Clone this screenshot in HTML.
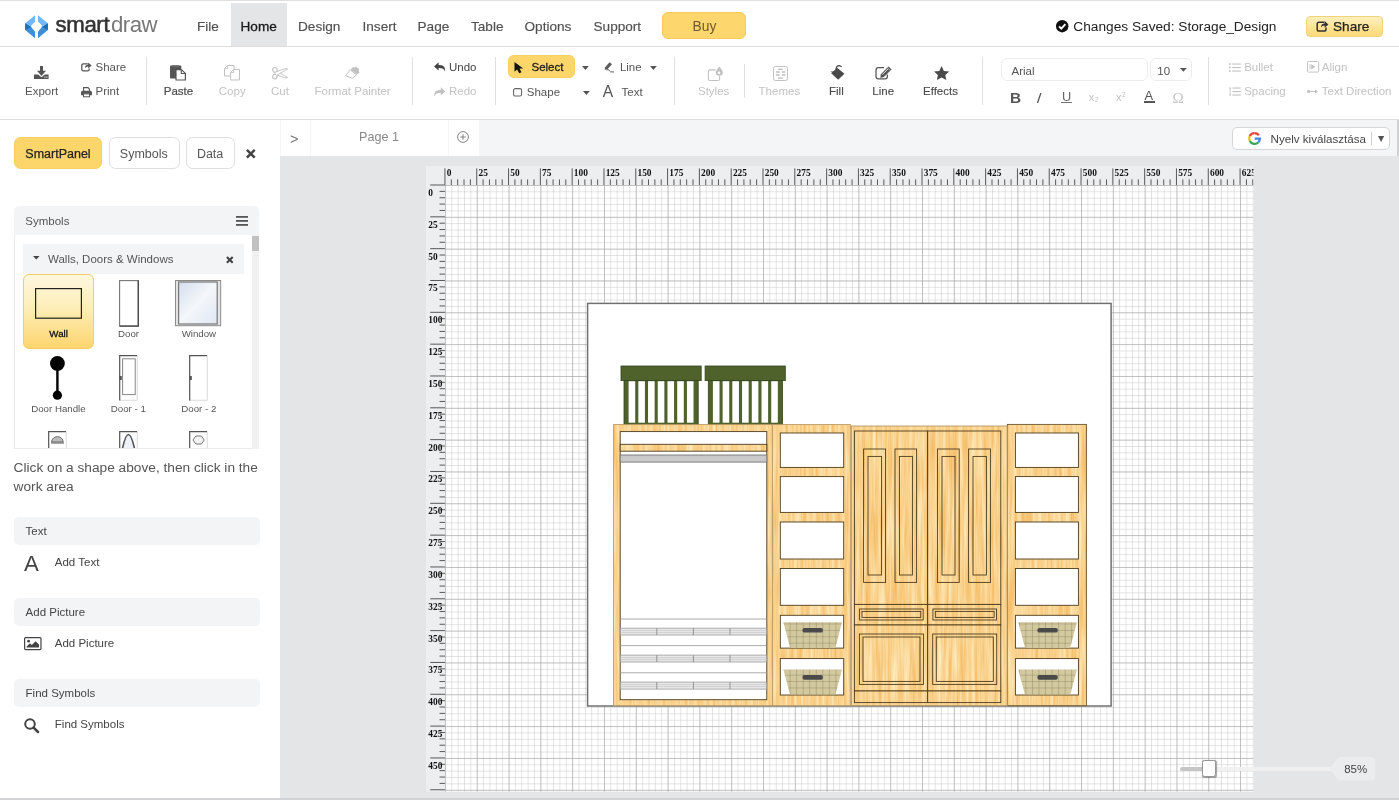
<!DOCTYPE html>
<html lang="en">
<head>
<meta charset="utf-8">
<title>SmartDraw - Storage_Design</title>
<style>
*{box-sizing:border-box;margin:0;padding:0}
html,body{width:1399px;height:800px;overflow:hidden;background:#fff}
body{font-family:"Liberation Sans",sans-serif;color:#555;position:relative;font-size:11.66px}
.abs{position:absolute}
.t{position:absolute;white-space:nowrap;line-height:1}
svg{position:absolute;overflow:visible}
/* header */
#topline{left:0;top:0;width:1399px;height:1px;background:#e0e0e0}
#hdr{left:0;top:2px;width:1399px;height:44px;background:#fff}
#hdrline{left:0;top:46px;width:1399px;height:1px;background:#dedede}
/* toolbar */
#tbline{left:0;top:119px;width:1399px;height:1px;background:#dedede}
/* left panel */
#leftpanel{left:0;top:120px;width:280px;height:678px;background:#fff}
#leftborder{left:280px;top:120px;width:1px;height:36px;background:#f1f2f3}
/* main */
#main{left:280px;top:120px;width:1119px;height:678px;background:#e4e5e7}
#tabbar{left:280px;top:120px;width:1119px;height:36px;background:#f4f5f6}
#botbar{left:0;top:798px;width:1399px;height:2px;background:#d2d3d5}
</style>
</head>
<body>
<div id="root" style="position:absolute;left:0;top:0;width:1399px;height:800px;will-change:transform">
<div class="abs" id="hdr"></div>
<div class="abs" id="topline"></div>
<div class="abs" id="hdrline"></div>
<div class="abs" id="tbline"></div>
<div class="abs" id="leftpanel"></div>
<div class="abs" id="leftborder"></div>
<div class="abs" id="main"></div>
<div class="abs" id="tabbar"></div>
<svg style="left:25px;top:14px;" width="24" height="25" viewBox="0 0 24 25"><polygon points="10.09,1.21 10.09,7.51 5.60,12.30 0.18,9.32" fill="#72b8f8"/><polygon points="0.18,9.32 5.60,12.30 10.09,17.65 10.09,24.18 0.18,16.07" fill="#3e8fd8"/><polygon points="0.18,9.32 5.90,13.00 0.18,16.07" fill="#1c6fb3"/><polygon points="13.01,1.21 13.01,7.51 17.50,12.30 22.92,9.32" fill="#72b8f8"/><polygon points="22.92,9.32 17.50,12.30 13.01,17.65 13.01,24.18 22.92,16.07" fill="#3e8fd8"/><polygon points="22.92,9.32 17.20,13.00 22.92,16.07" fill="#1c6fb3"/></svg>
<div class="t" style="left:55.50px;top:14.00px;font-size:22.2px;color:#333;font-weight:400;letter-spacing:-0.35px;-webkit-text-stroke:0.55px #333;">smart</div>
<div class="t" style="left:111.00px;top:14.00px;font-size:22.2px;color:#777;font-weight:400;letter-spacing:-0.5px;">draw</div>
<div class="abs" style="left:230.5px;top:2.5px;width:56px;height:43.5px;background:#e4e5e6"></div>
<div class="t" style="left:197.00px;top:20.00px;font-size:13.6px;color:#505050;-webkit-text-stroke:0.15px #505050;">File</div>
<div class="t" style="left:298.00px;top:20.00px;font-size:13.6px;color:#505050;-webkit-text-stroke:0.15px #505050;">Design</div>
<div class="t" style="left:362.50px;top:20.00px;font-size:13.6px;color:#505050;-webkit-text-stroke:0.15px #505050;">Insert</div>
<div class="t" style="left:417.50px;top:20.00px;font-size:13.6px;color:#505050;-webkit-text-stroke:0.15px #505050;">Page</div>
<div class="t" style="left:471.00px;top:20.00px;font-size:13.6px;color:#505050;-webkit-text-stroke:0.15px #505050;">Table</div>
<div class="t" style="left:524.50px;top:20.00px;font-size:13.6px;color:#505050;-webkit-text-stroke:0.15px #505050;">Options</div>
<div class="t" style="left:593.50px;top:20.00px;font-size:13.6px;color:#505050;-webkit-text-stroke:0.15px #505050;">Support</div>
<div class="t" style="left:240.50px;top:20.00px;font-size:13.6px;color:#1a1a1a;-webkit-text-stroke:0.3px #1a1a1a;">Home</div>
<div class="abs" style="left:662px;top:12px;width:84px;height:27px;background:#fdd76e;border:1px solid #f6c95a;border-radius:6px"></div>
<div class="t" style="left:692.50px;top:20.00px;font-size:13.8px;color:#6a5a2c;">Buy</div>
<svg style="left:1056.2px;top:20.3px;" width="12.4" height="12.4" viewBox="0 0 12.4 12.4"><circle cx="6.2" cy="6.2" r="6.2" fill="#111"/><path d="M3.1 6.4 L5.3 8.6 L9.4 4.2" stroke="#fff" stroke-width="1.9" fill="none"/></svg>
<div class="t" style="left:1073.30px;top:20.00px;font-size:13.7px;color:#222;">Changes Saved: Storage_Design</div>
<div class="abs" style="left:1306px;top:15.5px;width:77px;height:21px;border:1px solid #f3d27c;border-radius:4px;background:linear-gradient(#fdefbc,#fdd978)"></div>
<svg style="left:1315.8px;top:19.6px;" width="12.5" height="12" viewBox="0 0 12.5 12"><path d="M8.3 2.2 H3 Q1.2 2.2 1.2 4 V9.2 Q1.2 11 3 11 H8.2 Q10 11 10 9.2 V7.6" stroke="#333" stroke-width="1.5" fill="none"/><path d="M5 7.6 Q5 3.4 8.6 3.4 V1 L12.4 4.4 L8.6 7.8 V5.4 Q6.2 5.3 5 7.6 Z" fill="#333"/></svg>
<div class="t" style="left:1333.00px;top:20.00px;font-size:13.6px;color:#222;-webkit-text-stroke:0.25px #222;">Share</div>

<div class="abs" style="left:145.5px;top:56.5px;width:1px;height:48.5px;background:#e0e0e0"></div>
<div class="abs" style="left:412.3px;top:56.5px;width:1px;height:48.5px;background:#e0e0e0"></div>
<div class="abs" style="left:495px;top:56.5px;width:1px;height:48.5px;background:#e0e0e0"></div>
<div class="abs" style="left:674.1px;top:56.5px;width:1px;height:48.5px;background:#e0e0e0"></div>
<div class="abs" style="left:982.3px;top:56.5px;width:1px;height:48.5px;background:#e0e0e0"></div>
<div class="abs" style="left:1207.6px;top:56.5px;width:1px;height:48.5px;background:#e0e0e0"></div>
<div class="abs" style="left:744px;top:63.5px;width:1px;height:34px;background:#e0e0e0"></div>
<svg style="left:33.7px;top:65.7px;" width="14.6" height="13.1" viewBox="0 0 14.6 13.1"><rect x="6" y="0" width="3" height="5.2" fill="#555"/><polygon points="3,4.7 12,4.7 7.5,9.9" fill="#555"/><path d="M0 8.6 H4.2 L7.5 11.3 L10.8 8.6 H14.6 V13.1 H0 Z" fill="#555"/><rect x="10.4" y="10.6" width="1.1" height="1.1" fill="#fff"/><rect x="12.3" y="10.6" width="1.1" height="1.1" fill="#fff"/></svg>
<div class="t" style="left:25.00px;top:86.00px;font-size:11.5px;color:#555;">Export</div>
<svg style="left:81px;top:61.8px;" width="10.6" height="9.4" viewBox="0 0 10.6 9.4"><path d="M6.8 1.9 H2.4 Q0.8 1.9 0.8 3.5 V7.2 Q0.8 8.8 2.4 8.8 H6.6 Q8.2 8.8 8.2 7.2 V6.4" stroke="#555" stroke-width="1.25" fill="none"/><path d="M3.9 6.2 Q4 2.7 7.2 2.7 V0.6 L10.6 3.6 L7.2 6.6 V4.5 Q5 4.4 3.9 6.2 Z" fill="#555"/></svg>
<div class="t" style="left:95.50px;top:62.00px;font-size:11.5px;color:#555;">Share</div>
<svg style="left:80.8px;top:86.5px;" width="11" height="10.4" viewBox="0 0 11 10.4"><path d="M2.6 4.2 V0.6 H7 L8.4 2 V4.2" stroke="#555" stroke-width="1.1" fill="none"/><path d="M0 5.4 Q0 3.8 1.6 3.8 H9.4 Q11 3.8 11 5.4 V8.3 H8.6 V6.7 H2.4 V8.3 H0 Z" fill="#555"/><rect x="2.5" y="6.9" width="6" height="2.9" stroke="#555" stroke-width="1" fill="#fff"/></svg>
<div class="t" style="left:95.50px;top:86.00px;font-size:11.5px;color:#555;">Print</div>
<svg style="left:170.2px;top:65.4px;" width="16" height="15.2" viewBox="0 0 16 15.2"><rect x="0" y="0.4" width="11.3" height="13" rx="1" fill="#555"/><rect x="2.2" y="0" width="6.6" height="1.6" fill="#777"/><path d="M6 4.6 H11.4 L15.4 8.4 V15 H6 Z" fill="#fff" stroke="#555" stroke-width="1.2" stroke-linejoin="round"/><path d="M11.3 4.8 V8.5 H15.2" fill="none" stroke="#555" stroke-width="1.1"/></svg>
<div class="t" style="left:163.80px;top:86.00px;font-size:11.5px;color:#4a4a4a;-webkit-text-stroke:0.2px #4a4a4a;">Paste</div>
<svg style="left:224px;top:65.4px;" width="16" height="15.4" viewBox="0 0 16 15.4"><path d="M3.6 0.5 H10 V11 H0.5 V3.6 Z" fill="#fff" stroke="#c2c2c2" stroke-width="1"/><path d="M0.6 3.7 H3.7 V0.6" fill="none" stroke="#c2c2c2" stroke-width="0.9"/><path d="M9.6 4.5 H15.5 V15 H6.6 V7.5 Z" fill="#fff" stroke="#c2c2c2" stroke-width="1"/><path d="M6.7 7.6 H9.7 V4.6" fill="none" stroke="#c2c2c2" stroke-width="0.9"/></svg>
<div class="t" style="left:218.80px;top:86.00px;font-size:11.5px;color:#c2c2c2;">Copy</div>
<svg style="left:271.8px;top:67.4px;" width="16.2" height="12.6" viewBox="0 0 16.2 12.6"><ellipse cx="2.9" cy="2.9" rx="2.2" ry="2.4" fill="none" stroke="#c2c2c2" stroke-width="1.1" transform="rotate(-25 2.9 2.9)"/><ellipse cx="2.9" cy="9.6" rx="2.2" ry="2.4" fill="none" stroke="#c2c2c2" stroke-width="1.1" transform="rotate(25 2.9 9.6)"/><path d="M4.6 4.2 L15.8 10.6 L13.4 11 L4 7.6" fill="#fff" stroke="#c2c2c2" stroke-width="0.9" stroke-linejoin="round"/><path d="M4.6 8.3 L15.8 1.9 L13.4 1.5 L4 4.9" fill="#fff" stroke="#c2c2c2" stroke-width="0.9" stroke-linejoin="round"/></svg>
<div class="t" style="left:271.00px;top:86.00px;font-size:11.5px;color:#c2c2c2;">Cut</div>
<svg style="left:345.3px;top:66.4px;" width="15" height="12.8" viewBox="0 0 15 12.8"><path d="M5.2 3.8 L11.6 8.8 L7.2 12.3 L0.6 9.6 Z" fill="#fff" stroke="#c2c2c2" stroke-width="1" stroke-linejoin="round"/><path d="M5.6 3.4 L8.2 0.9 L9.8 1.5 L11.2 0.4 L12.2 2 L14 2.6 L13.9 5.2 L14.6 6.6 L12 8.6 Z" fill="#c2c2c2"/></svg>
<div class="t" style="left:314.60px;top:86.00px;font-size:11.5px;color:#c2c2c2;">Format Painter</div>
<svg style="left:434px;top:62.1px;" width="11.4" height="9.4" viewBox="0 0 11.4 9.4"><path d="M4.6 0.3 V2.9 Q11 2.7 11.2 8.2 Q11.2 8.9 10.9 9.3 Q9.8 5.8 4.6 6 V8.6 L0 4.4 Z" fill="#444"/></svg>
<div class="t" style="left:449.00px;top:62.00px;font-size:11.5px;color:#444;">Undo</div>
<svg style="left:434px;top:86.6px;" width="11.4" height="9.4" viewBox="0 0 11.4 9.4"><g transform="translate(11.4,0) scale(-1,1)"><path d="M4.6 0.3 V2.9 Q11 2.7 11.2 8.2 Q11.2 8.9 10.9 9.3 Q9.8 5.8 4.6 6 V8.6 L0 4.4 Z" fill="#c2c2c2"/></g></svg>
<div class="t" style="left:449.00px;top:86.00px;font-size:11.5px;color:#c2c2c2;">Redo</div>
<div class="abs" style="left:507.5px;top:54.5px;width:67px;height:23.5px;background:#fdd66b;border:1px solid #f9cf62;border-radius:5.5px"></div>
<svg style="left:513.6px;top:62.1px;" width="9.7" height="11.4" viewBox="0 0 9.7 11.4"><path d="M0.5 0 L0.5 9.8 L3.1 7.5 L5.2 11.3 L7.5 10.2 L5.5 6.6 L9.2 6.4 Z" fill="#111"/></svg>
<div class="t" style="left:531.50px;top:62.00px;font-size:11.5px;color:#1c1c1c;-webkit-text-stroke:0.3px #1c1c1c;">Select</div>
<svg style="left:582px;top:66.2px;" width="6.8" height="3.9" viewBox="0 0 6.8 3.9"><polygon points="0,0 6.8,0 3.4,3.9" fill="#555"/></svg>
<svg style="left:604.4px;top:62px;" width="10" height="10.5" viewBox="0 0 10 10.5"><path d="M5.6 0.3 L8 2.2 L3.4 7.2 L0.6 7.8 L1.2 5.2 Z" fill="#5a5a5a"/><path d="M2.4 7.8 Q5.6 7.2 5.4 8.8 Q5.3 10.2 10 10" stroke="#5a5a5a" stroke-width="1" fill="none"/></svg>
<div class="t" style="left:619.90px;top:62.00px;font-size:11.5px;color:#555;">Line</div>
<svg style="left:649.6px;top:66.2px;" width="6.8" height="3.9" viewBox="0 0 6.8 3.9"><polygon points="0,0 6.8,0 3.4,3.9" fill="#555"/></svg>
<svg style="left:513.4px;top:87.6px;" width="9.2" height="8.6" viewBox="0 0 9.2 8.6"><rect x="0.6" y="0.6" width="8" height="7.4" rx="1.6" fill="#fff" stroke="#666" stroke-width="1.1"/></svg>
<div class="t" style="left:526.80px;top:87.00px;font-size:11.5px;color:#555;">Shape</div>
<svg style="left:583px;top:91.3px;" width="6.8" height="3.9" viewBox="0 0 6.8 3.9"><polygon points="0,0 6.8,0 3.4,3.9" fill="#555"/></svg>
<div class="t" style="left:602.80px;top:84.00px;font-size:15.6px;color:#555;">A</div>
<div class="t" style="left:621.60px;top:87.00px;font-size:11.5px;color:#555;">Text</div>
<svg style="left:706.7px;top:65.7px;" width="16.5" height="15" viewBox="0 0 16.5 15"><path d="M8.6 3.9 H3 Q1.4 3.9 1.4 5.5 V12.9 Q1.4 14.5 3 14.5 H11 Q12.6 14.5 12.6 12.9 V10" fill="none" stroke="#c2c2c2" stroke-width="1.1"/><path d="M12.3 0.4 Q15.9 4.6 15.9 6.6 Q15.9 9.8 12.3 9.8 Q8.7 9.8 8.7 6.6 Q8.7 4.6 12.3 0.4 Z" fill="#c2c2c2"/><circle cx="12" cy="6.8" r="1.3" fill="#fff"/></svg>
<div class="t" style="left:698.00px;top:86.00px;font-size:11.5px;color:#c2c2c2;">Styles</div>
<svg style="left:772.8px;top:65.7px;" width="15" height="15" viewBox="0 0 15 15"><rect x="0.5" y="0.5" width="14" height="14" rx="1.8" fill="#fff" stroke="#c2c2c2" stroke-width="1"/><rect x="5" y="2.6" width="4.8" height="1.4" fill="#c2c2c2"/><rect x="5" y="11.4" width="4.8" height="1.4" fill="#c2c2c2"/><rect x="3" y="5.2" width="3.6" height="1.6" fill="#c2c2c2"/><rect x="8.8" y="5.2" width="3.6" height="1.6" fill="#c2c2c2"/><rect x="3" y="8.2" width="3.6" height="1.6" fill="#c2c2c2"/><rect x="8.8" y="8.2" width="3.6" height="1.6" fill="#c2c2c2"/></svg>
<div class="t" style="left:758.60px;top:86.00px;font-size:11.5px;color:#c2c2c2;">Themes</div>
<svg style="left:829.6px;top:65.2px;" width="14.6" height="14.6" viewBox="0 0 14.6 14.6"><polygon points="1.2,8.2 7.2,2.8 14.4,8.8 8.2,14.7" fill="#484848"/><path d="M0.2 6.6 H6.4 V9.4 Z" fill="#484848"/><path d="M6 4.6 Q6.2 0.8 9 0.7 Q10.8 0.8 11.6 2" fill="none" stroke="#484848" stroke-width="1.2"/></svg>
<div class="t" style="left:829.00px;top:86.00px;font-size:11.5px;color:#4a4a4a;-webkit-text-stroke:0.12px #4a4a4a;">Fill</div>
<svg style="left:875.4px;top:66px;" width="17.5" height="13.4" viewBox="0 0 17.5 13.4"><path d="M9 1.6 H3.4 Q1 1.6 1 4 V10.6 Q1 13 3.4 13 H10 Q12.4 13 12.4 10.6 V8.4" fill="none" stroke="#555" stroke-width="1.25"/><path d="M6.2 8.2 L13.6 0.8 L16.2 3.4 L8.8 10.8 L5.6 11.4 Z" fill="#555" stroke="#555" stroke-width="0.6" stroke-linejoin="round"/><path d="M7.4 8.6 L13.2 2.8" stroke="#fff" stroke-width="0.8"/><path d="M12.6 1.9 L15.1 4.4" stroke="#fff" stroke-width="0.5"/></svg>
<div class="t" style="left:872.30px;top:86.00px;font-size:11.5px;color:#4a4a4a;-webkit-text-stroke:0.12px #4a4a4a;">Line</div>
<svg style="left:934.4px;top:66px;" width="15.2" height="14" viewBox="0 0 15.2 14"><polygon points="7.6,0 9.9,4.9 15.2,5.5 11.3,9.1 12.3,14 7.6,11.5 2.9,14 3.9,9.1 0,5.5 5.3,4.9" fill="#4a4a4a"/></svg>
<div class="t" style="left:923.00px;top:86.00px;font-size:11.5px;color:#4a4a4a;-webkit-text-stroke:0.12px #4a4a4a;">Effects</div>
<div class="abs" style="left:1001.3px;top:58px;width:147px;height:23px;border:1px solid #ececec;border-radius:6px;background:#fff"></div>
<div class="t" style="left:1011.50px;top:66.00px;font-size:11.5px;color:#555;">Arial</div>
<div class="abs" style="left:1150.4px;top:58px;width:42px;height:23px;border:1px solid #ececec;border-radius:6px;background:#fff"></div>
<div class="t" style="left:1157.30px;top:66.00px;font-size:11.5px;color:#555;">10</div>
<svg style="left:1179.8px;top:67.5px;" width="6.8" height="3.8" viewBox="0 0 6.8 3.8"><polygon points="0,0 6.8,0 3.4,3.8" fill="#555"/></svg>
<div class="t" style="left:1010.00px;top:90.00px;font-size:15.4px;color:#555;font-weight:700;">B</div>
<div class="t" style="left:1037.40px;top:91.00px;font-size:14.6px;color:#555;font-weight:400;font-style:italic;transform:skewX(-8deg);">I</div>
<div class="t" style="left:1062.00px;top:91.00px;font-size:12.8px;color:#666;">U</div>
<div class="abs" style="left:1061px;top:102.3px;width:11px;height:0.9px;background:#777"></div>
<div class="t" style="left:1088.80px;top:92.00px;font-size:11.2px;color:#c2c2c2;">x<span style="font-size:6.5px;position:relative;top:1.2px;left:0.3px">2</span></div>
<div class="t" style="left:1116.00px;top:92.00px;font-size:11.2px;color:#c2c2c2;">x<span style="font-size:6.5px;position:relative;top:-4.4px;left:0.3px">2</span></div>
<div class="t" style="left:1144.60px;top:90.00px;font-size:12.9px;color:#555;">A</div>
<div class="abs" style="left:1144.4px;top:101.2px;width:10.8px;height:1.7px;background:#555"></div>
<div class="t" style="left:1172.40px;top:90.00px;font-size:15.2px;color:#c6c6c6;font-family:&quot;Liberation Serif&quot;,serif;">&#937;</div>
<svg style="left:1228.8px;top:62.5px;" width="11.8" height="9" viewBox="0 0 11.8 9"><rect x="0" y="0.2" width="1.7" height="1.7" fill="#c2c2c2"/><rect x="3.2" y="0.5" width="8.6" height="1.1" fill="#c2c2c2"/><rect x="0" y="3.7" width="1.7" height="1.7" fill="#c2c2c2"/><rect x="3.2" y="4.0" width="8.6" height="1.1" fill="#c2c2c2"/><rect x="0" y="7.2" width="1.7" height="1.7" fill="#c2c2c2"/><rect x="3.2" y="7.5" width="8.6" height="1.1" fill="#c2c2c2"/></svg>
<div class="t" style="left:1244.20px;top:62.00px;font-size:11.5px;color:#c2c2c2;">Bullet</div>
<svg style="left:1228.8px;top:86.8px;" width="11.8" height="9.2" viewBox="0 0 11.8 9.2"><path d="M1.1 0 L2.2 1.6 H0 Z M1.1 9.2 L2.2 7.6 H0 Z" fill="#c2c2c2"/><rect x="0.7" y="1.2" width="0.8" height="6.8" fill="#c2c2c2"/><rect x="3.4" y="0.5" width="8.4" height="1.1" fill="#c2c2c2"/><rect x="3.4" y="4" width="8.4" height="1.1" fill="#c2c2c2"/><rect x="3.4" y="7.5" width="8.4" height="1.1" fill="#c2c2c2"/></svg>
<div class="t" style="left:1244.20px;top:86.00px;font-size:11.5px;color:#c2c2c2;">Spacing</div>
<svg style="left:1306.8px;top:61.2px;" width="12.2" height="11.6" viewBox="0 0 12.2 11.6"><rect x="0.5" y="0.5" width="11.2" height="10.6" rx="1" fill="#fff" stroke="#c2c2c2" stroke-width="1"/><rect x="2.6" y="3" width="0.9" height="5.6" fill="#c2c2c2"/><polygon points="4.2,3.2 8.2,5.8 4.2,8.4" fill="#c2c2c2"/></svg>
<div class="t" style="left:1321.80px;top:62.00px;font-size:11.5px;color:#c2c2c2;">Align</div>
<svg style="left:1307px;top:88.6px;" width="11" height="4.8" viewBox="0 0 11 4.8"><rect x="1.4" y="1.9" width="8.2" height="1" fill="#c2c2c2"/><circle cx="1.6" cy="2.4" r="1.6" fill="#c2c2c2"/><polygon points="8,0.2 11,2.4 8,4.6" fill="#c2c2c2"/></svg>
<div class="t" style="left:1321.80px;top:86.00px;font-size:11.5px;color:#c2c2c2;">Text Direction</div>

<div class="abs" style="left:13.7px;top:137.2px;width:88.7px;height:32.3px;background:#fdd66b;border:1px solid #f9cf62;border-radius:6.5px"></div>
<div class="t" style="left:25.30px;top:148.00px;font-size:12.5px;color:#222;-webkit-text-stroke:0.25px #222;">SmartPanel</div>
<div class="abs" style="left:108.5px;top:137.2px;width:71px;height:32.3px;background:#fff;border:1px solid #dedede;border-radius:6.5px"></div>
<div class="t" style="left:119.80px;top:148.00px;font-size:12.5px;color:#555;">Symbols</div>
<div class="abs" style="left:186px;top:137.2px;width:49px;height:32.3px;background:#fff;border:1px solid #dedede;border-radius:6.5px"></div>
<div class="t" style="left:196.90px;top:148.00px;font-size:12.5px;color:#555;">Data</div>
<svg style="left:245.6px;top:149.2px;" width="9.6" height="9.6" viewBox="0 0 9.6 9.6"><path d="M0.9 0.9 L8.7 8.7 M8.7 0.9 L0.9 8.7" stroke="#444" stroke-width="2.5" fill="none"/></svg>
<div class="abs" style="left:14px;top:205.8px;width:245px;height:29px;background:#f3f4f6;border-radius:5px 5px 0 0"></div>
<div class="t" style="left:25.30px;top:216.00px;font-size:11.5px;color:#555;">Symbols</div>
<svg style="left:235.8px;top:215.6px;" width="12" height="10" viewBox="0 0 12 10"><rect x="0" y="0" width="12" height="1.8" fill="#555"/><rect x="0" y="4" width="12" height="1.8" fill="#555"/><rect x="0" y="8" width="12" height="1.8" fill="#555"/></svg>
<div class="abs" style="left:14px;top:234.6px;width:245px;height:214.6px;border:1px solid #ebebeb;border-top:none;background:#fff"></div>
<div class="abs" style="left:251.6px;top:234.8px;width:7.4px;height:214.2px;background:#f1f1f1"></div>
<div class="abs" style="left:251.9px;top:236px;width:6.8px;height:15.4px;background:#c1c1c1"></div>
<div class="abs" style="left:23px;top:244.3px;width:220.8px;height:29.4px;background:#f3f4f6"></div>
<svg style="left:33.2px;top:256.4px;" width="6.6" height="3.6" viewBox="0 0 6.6 3.6"><polygon points="0,0 6.6,0 3.3,3.6" fill="#444"/></svg>
<div class="t" style="left:48.00px;top:254.00px;font-size:11.5px;color:#555;">Walls, Doors &amp; Windows</div>
<svg style="left:226.2px;top:255.6px;" width="7.6" height="7.6" viewBox="0 0 7.6 7.6"><path d="M0.9 0.9 L6.699999999999999 6.699999999999999 M6.699999999999999 0.9 L0.9 6.699999999999999" stroke="#444" stroke-width="2.1" fill="none"/></svg>
<div class="abs" style="left:23.2px;top:273.7px;width:70.5px;height:75px;background:linear-gradient(#fef7e0,#fdeeb8 45%,#fdd56e);border:1px solid #f7cc62;border-radius:6px"></div>
<svg style="left:35.1px;top:288.3px;" width="47" height="30.8" viewBox="0 0 47 30.8"><rect x="0.6" y="0.6" width="45.8" height="29.6" fill="none" stroke="#222" stroke-width="1.2"/></svg>
<div class="t" style="left:58.60px;top:329.00px;font-size:9.7px;color:#111;transform:translateX(-50%);-webkit-text-stroke:0.3px #111;">Wall</div>
<svg style="left:118.7px;top:280.2px;" width="20" height="46.8" viewBox="0 0 20 46.8"><rect x="0.6" y="0.6" width="18.6" height="45.4" fill="#fff" stroke="#777" stroke-width="1.1"/><path d="M19.3 0.6 V46.1 H0.6" fill="none" stroke="#444" stroke-width="1.2"/></svg>
<div class="t" style="left:128.50px;top:329.00px;font-size:9.7px;color:#555;transform:translateX(-50%);">Door</div>
<svg style="left:175.4px;top:280.2px;" width="46.2" height="46.2" viewBox="0 0 46.2 46.2"><defs><linearGradient id="wg" x1="0" y1="0" x2="1" y2="1"><stop offset="0" stop-color="#d3deec"/><stop offset="0.5" stop-color="#f4f7fb"/><stop offset="1" stop-color="#dfe7f2"/></linearGradient></defs><rect x="0.5" y="0.5" width="45.2" height="45.2" fill="#e4e4e4" stroke="#8a8a8a" stroke-width="1"/><rect x="3.6" y="2" width="38.6" height="42" fill="url(#wg)" stroke="#777" stroke-width="1.2"/></svg>
<div class="t" style="left:198.90px;top:329.00px;font-size:9.7px;color:#555;transform:translateX(-50%);">Window</div>
<svg style="left:50px;top:355.6px;" width="15" height="44" viewBox="0 0 15 44"><circle cx="7.4" cy="7.4" r="7.4" fill="#000"/><rect x="6.2" y="7" width="2.4" height="32" fill="#000"/><circle cx="7.4" cy="39.2" r="4.6" fill="#000"/></svg>
<div class="t" style="left:58.40px;top:404.00px;font-size:9.7px;color:#555;transform:translateX(-50%);">Door Handle</div>
<svg style="left:118.7px;top:355.2px;" width="19" height="46" viewBox="0 0 19 46"><rect x="0.6" y="0.6" width="17.6" height="44.6" fill="#fff" stroke="#cfcfcf" stroke-width="0.8"/><path d="M0.7 45.6 V0.6 H18" fill="none" stroke="#555" stroke-width="1.2"/><rect x="3.6" y="3.8" width="12.6" height="35.8" fill="#fff" stroke="#888" stroke-width="1"/><rect x="0.6" y="21" width="2.2" height="4" fill="#555"/></svg>
<div class="t" style="left:128.30px;top:404.00px;font-size:9.7px;color:#555;transform:translateX(-50%);">Door - 1</div>
<svg style="left:189px;top:355.2px;" width="19" height="46" viewBox="0 0 19 46"><rect x="0.6" y="0.6" width="17.6" height="44.6" fill="#fff" stroke="#cfcfcf" stroke-width="0.8"/><path d="M0.7 45.6 V0.6 H18" fill="none" stroke="#555" stroke-width="1.2"/><rect x="0.6" y="21" width="2.2" height="4" fill="#555"/></svg>
<div class="t" style="left:198.80px;top:404.00px;font-size:9.7px;color:#555;transform:translateX(-50%);">Door - 2</div>
<div class="abs" style="left:48.2px;top:430.5px;width:19px;height:17.8px;overflow:hidden"><svg style="left:0px;top:0px;" width="19" height="31" viewBox="0 0 19 31"><rect x="0.6" y="0.6" width="17.6" height="30" fill="#fff" stroke="#cfcfcf" stroke-width="0.8"/><path d="M0.7 30 V0.6 H18" fill="none" stroke="#555" stroke-width="1.2"/><path d="M3.6 11 A5.8 5.4 0 0 1 15.2 11 Z" fill="#bbb" stroke="#555" stroke-width="0.8"/><path d="M3 12 H16" stroke="#555" stroke-width="1"/></svg>
</div>
<div class="abs" style="left:118.7px;top:430.5px;width:19px;height:17.8px;overflow:hidden"><svg style="left:0px;top:0px;" width="19" height="31" viewBox="0 0 19 31"><rect x="0.6" y="0.6" width="17.6" height="30" fill="#fff" stroke="#cfcfcf" stroke-width="0.8"/><path d="M0.7 30 V0.6 H18" fill="none" stroke="#555" stroke-width="1.2"/><path d="M3.2 19 Q9.4 -12 15.8 19" fill="#eef1f8" stroke="#555" stroke-width="1.6"/></svg>
</div>
<div class="abs" style="left:189px;top:430.5px;width:19px;height:17.8px;overflow:hidden"><svg style="left:0px;top:0px;" width="19" height="31" viewBox="0 0 19 31"><rect x="0.6" y="0.6" width="17.6" height="30" fill="#fff" stroke="#cfcfcf" stroke-width="0.8"/><path d="M0.7 30 V0.6 H18" fill="none" stroke="#555" stroke-width="1.2"/><polygon points="4,9 6.8,5 12.4,5 15.2,9 12.4,13 6.8,13" fill="#f2f2f2" stroke="#777" stroke-width="1"/></svg>
</div>
<div class="t" style="left:13.60px;top:461.00px;font-size:13.7px;color:#555;">Click on a shape above, then click in the</div>
<div class="t" style="left:13.60px;top:480.00px;font-size:13.7px;color:#555;">work area</div>
<div class="abs" style="left:13.6px;top:516.5px;width:246.4px;height:28.4px;background:#f3f4f6;border-radius:5px"></div>
<div class="t" style="left:25.60px;top:526.00px;font-size:11.5px;color:#444;">Text</div>
<div class="abs" style="left:13.6px;top:597.5px;width:246.4px;height:28.4px;background:#f3f4f6;border-radius:5px"></div>
<div class="t" style="left:25.60px;top:607.00px;font-size:11.5px;color:#444;">Add Picture</div>
<div class="abs" style="left:13.6px;top:678.5px;width:246.4px;height:28.4px;background:#f3f4f6;border-radius:5px"></div>
<div class="t" style="left:25.60px;top:688.00px;font-size:11.5px;color:#444;">Find Symbols</div>
<div class="t" style="left:24.10px;top:553.00px;font-size:22.2px;color:#444;">A</div>
<div class="t" style="left:54.80px;top:557.00px;font-size:11.5px;color:#444;">Add Text</div>
<svg style="left:23.9px;top:637px;" width="17.6" height="13.2" viewBox="0 0 17.6 13.2"><rect x="0.6" y="0.6" width="16.4" height="12" rx="1" fill="#fff" stroke="#444" stroke-width="1.2"/><path d="M2.6 10.6 L2.6 9.4 L6 6.2 L7.8 8 L11.6 4.2 L15 7.6 V10.6 Z" fill="#444"/><circle cx="4.6" cy="4.2" r="1.4" fill="#444"/></svg>
<div class="t" style="left:54.80px;top:638.00px;font-size:11.5px;color:#444;">Add Picture</div>
<svg style="left:23.9px;top:718px;" width="15.6" height="15.6" viewBox="0 0 15.6 15.6"><circle cx="6" cy="6" r="4.8" fill="none" stroke="#444" stroke-width="2"/><path d="M9.6 9.6 L14 14" stroke="#444" stroke-width="2.6" stroke-linecap="round"/></svg>
<div class="t" style="left:54.80px;top:719.00px;font-size:11.5px;color:#444;">Find Symbols</div>

<div class="abs" style="left:280.5px;top:120px;width:29.5px;height:36px;background:#fff"></div>
<div class="abs" style="left:311px;top:120px;width:136.7px;height:36px;background:#fff"></div>
<div class="abs" style="left:448.8px;top:120px;width:30.6px;height:36px;background:#fff"></div>
<div class="t" style="left:290.00px;top:132.00px;font-size:14.5px;color:#777;">&gt;</div>
<div class="t" style="left:359.00px;top:131.00px;font-size:12.6px;color:#888;">Page 1</div>
<svg style="left:457.3px;top:131px;" width="12" height="12" viewBox="0 0 12 12"><circle cx="6" cy="6" r="5.4" fill="none" stroke="#777" stroke-width="0.9"/><path d="M6 3.2 V8.8 M3.2 6 H8.8" stroke="#777" stroke-width="0.9"/></svg>
<div class="abs" style="left:1232px;top:127px;width:157.5px;height:22.8px;background:#fff;border:1px solid #d6d6d6;border-radius:5px"></div>
<svg style="left:1247.6px;top:131.6px;" width="13.2" height="13.2" viewBox="0 0 13.2 13.2"><g fill="none" stroke-width="2.3"><path d="M10.9 3.2 A5.4 5.4 0 0 0 6.5 1.15" stroke="#ea4335"/><path d="M6.5 1.15 A5.4 5.4 0 0 0 1.75 4.1" stroke="#ea4335"/><path d="M1.75 4.1 A5.4 5.4 0 0 0 1.75 9" stroke="#fbbc05"/><path d="M1.75 9 A5.4 5.4 0 0 0 10.4 10.3" stroke="#34a853"/><path d="M10.4 10.3 A5.4 5.4 0 0 0 11.9 6.55 H6.7" stroke="#4285f4"/></g></svg>
<div class="t" style="left:1270.60px;top:133.00px;font-size:11.6px;color:#444;">Nyelv kiv&#225;laszt&#225;sa</div>
<div class="abs" style="left:1371px;top:132px;width:1px;height:13px;background:#cfcfcf"></div>
<svg style="left:1377.8px;top:135.9px;" width="6.2" height="5.9" viewBox="0 0 6.2 5.9"><polygon points="0,0 6.2,0 3.1,5.9" fill="#555"/></svg>

<svg style="left:0;top:0" width="1399" height="800" viewBox="0 0 1399 800"><defs><clipPath id="rc"><rect x="426" y="166" width="827.5" height="625.8"/></clipPath></defs><g clip-path="url(#rc)"><defs><pattern id="gmin" x="444.95" y="185.0" width="6.3610" height="6.3660" patternUnits="userSpaceOnUse"><path d="M0 0 V6.3660 M0 0 H6.3610" stroke="#c4c4c4" stroke-width="0.9" fill="none"/></pattern><pattern id="gmaj" x="444.95" y="185.0" width="31.805" height="31.83" patternUnits="userSpaceOnUse"><path d="M0 0 V31.83 M0 0 H31.805" stroke="#969696" stroke-width="0.9" fill="none"/></pattern><filter id="woodf" x="0" y="0" width="100%" height="100%" color-interpolation-filters="sRGB"><feTurbulence type="fractalNoise" baseFrequency="0.32 0.014" numOctaves="3" seed="11"/><feColorMatrix type="matrix" values="0.05 0 0 0 0.952  0.27 0 0 0 0.69  0.50 0 0 0 0.31  0 0 0 0 1"/></filter><pattern id="wood" x="610" y="420" width="480" height="290" patternUnits="userSpaceOnUse"><rect x="0" y="0" width="480" height="290" filter="url(#woodf)"/></pattern><pattern id="bask" x="789.6" y="623.5" width="6.55" height="6.4" patternUnits="userSpaceOnUse"><rect width="6.55" height="6.4" fill="#d2c99f"/><path d="M0 0 V6.4 M0 0 H6.55" stroke="#8a8260" stroke-width="0.85" fill="none"/></pattern></defs><rect x="426" y="166" width="827.5" height="19.0" fill="#edeeef"/><rect x="426" y="185.0" width="18.94999999999999" height="606.8" fill="#edeeef"/><rect x="444.95" y="185.0" width="808.55" height="606.8" fill="#fff"/><rect x="444.95" y="185.0" width="808.55" height="606.8" fill="url(#gmin)"/><rect x="444.95" y="185.0" width="808.55" height="606.8" fill="url(#gmaj)"/><path d="M444.95 168.4 V185.0M451.31 179.4 V185.0M457.67 179.4 V185.0M464.03 179.4 V185.0M470.39 179.4 V185.0M476.75 168.4 V185.0M483.12 179.4 V185.0M489.48 179.4 V185.0M495.84 179.4 V185.0M502.20 179.4 V185.0M508.56 168.4 V185.0M514.92 179.4 V185.0M521.28 179.4 V185.0M527.64 179.4 V185.0M534.00 179.4 V185.0M540.37 168.4 V185.0M546.73 179.4 V185.0M553.09 179.4 V185.0M559.45 179.4 V185.0M565.81 179.4 V185.0M572.17 168.4 V185.0M578.53 179.4 V185.0M584.89 179.4 V185.0M591.25 179.4 V185.0M597.61 179.4 V185.0M603.98 168.4 V185.0M610.34 179.4 V185.0M616.70 179.4 V185.0M623.06 179.4 V185.0M629.42 179.4 V185.0M635.78 168.4 V185.0M642.14 179.4 V185.0M648.50 179.4 V185.0M654.86 179.4 V185.0M661.22 179.4 V185.0M667.59 168.4 V185.0M673.95 179.4 V185.0M680.31 179.4 V185.0M686.67 179.4 V185.0M693.03 179.4 V185.0M699.39 168.4 V185.0M705.75 179.4 V185.0M712.11 179.4 V185.0M718.47 179.4 V185.0M724.83 179.4 V185.0M731.19 168.4 V185.0M737.56 179.4 V185.0M743.92 179.4 V185.0M750.28 179.4 V185.0M756.64 179.4 V185.0M763.00 168.4 V185.0M769.36 179.4 V185.0M775.72 179.4 V185.0M782.08 179.4 V185.0M788.44 179.4 V185.0M794.80 168.4 V185.0M801.17 179.4 V185.0M807.53 179.4 V185.0M813.89 179.4 V185.0M820.25 179.4 V185.0M826.61 168.4 V185.0M832.97 179.4 V185.0M839.33 179.4 V185.0M845.69 179.4 V185.0M852.05 179.4 V185.0M858.41 168.4 V185.0M864.78 179.4 V185.0M871.14 179.4 V185.0M877.50 179.4 V185.0M883.86 179.4 V185.0M890.22 168.4 V185.0M896.58 179.4 V185.0M902.94 179.4 V185.0M909.30 179.4 V185.0M915.66 179.4 V185.0M922.02 168.4 V185.0M928.39 179.4 V185.0M934.75 179.4 V185.0M941.11 179.4 V185.0M947.47 179.4 V185.0M953.83 168.4 V185.0M960.19 179.4 V185.0M966.55 179.4 V185.0M972.91 179.4 V185.0M979.27 179.4 V185.0M985.63 168.4 V185.0M992.00 179.4 V185.0M998.36 179.4 V185.0M1004.72 179.4 V185.0M1011.08 179.4 V185.0M1017.44 168.4 V185.0M1023.80 179.4 V185.0M1030.16 179.4 V185.0M1036.52 179.4 V185.0M1042.88 179.4 V185.0M1049.24 168.4 V185.0M1055.61 179.4 V185.0M1061.97 179.4 V185.0M1068.33 179.4 V185.0M1074.69 179.4 V185.0M1081.05 168.4 V185.0M1087.41 179.4 V185.0M1093.77 179.4 V185.0M1100.13 179.4 V185.0M1106.49 179.4 V185.0M1112.86 168.4 V185.0M1119.22 179.4 V185.0M1125.58 179.4 V185.0M1131.94 179.4 V185.0M1138.30 179.4 V185.0M1144.66 168.4 V185.0M1151.02 179.4 V185.0M1157.38 179.4 V185.0M1163.74 179.4 V185.0M1170.10 179.4 V185.0M1176.46 168.4 V185.0M1182.83 179.4 V185.0M1189.19 179.4 V185.0M1195.55 179.4 V185.0M1201.91 179.4 V185.0M1208.27 168.4 V185.0M1214.63 179.4 V185.0M1220.99 179.4 V185.0M1227.35 179.4 V185.0M1233.71 179.4 V185.0M1240.08 168.4 V185.0M1246.44 179.4 V185.0M1252.80 179.4 V185.0M430.2 185.00 H444.95M439.55 191.37 H444.95M439.55 197.73 H444.95M439.55 204.10 H444.95M439.55 210.46 H444.95M430.2 216.83 H444.95M439.55 223.20 H444.95M439.55 229.56 H444.95M439.55 235.93 H444.95M439.55 242.29 H444.95M430.2 248.66 H444.95M439.55 255.03 H444.95M439.55 261.39 H444.95M439.55 267.76 H444.95M439.55 274.12 H444.95M430.2 280.49 H444.95M439.55 286.86 H444.95M439.55 293.22 H444.95M439.55 299.59 H444.95M439.55 305.95 H444.95M430.2 312.32 H444.95M439.55 318.69 H444.95M439.55 325.05 H444.95M439.55 331.42 H444.95M439.55 337.78 H444.95M430.2 344.15 H444.95M439.55 350.52 H444.95M439.55 356.88 H444.95M439.55 363.25 H444.95M439.55 369.61 H444.95M430.2 375.98 H444.95M439.55 382.35 H444.95M439.55 388.71 H444.95M439.55 395.08 H444.95M439.55 401.44 H444.95M430.2 407.81 H444.95M439.55 414.18 H444.95M439.55 420.54 H444.95M439.55 426.91 H444.95M439.55 433.27 H444.95M430.2 439.64 H444.95M439.55 446.01 H444.95M439.55 452.37 H444.95M439.55 458.74 H444.95M439.55 465.10 H444.95M430.2 471.47 H444.95M439.55 477.84 H444.95M439.55 484.20 H444.95M439.55 490.57 H444.95M439.55 496.93 H444.95M430.2 503.30 H444.95M439.55 509.67 H444.95M439.55 516.03 H444.95M439.55 522.40 H444.95M439.55 528.76 H444.95M430.2 535.13 H444.95M439.55 541.50 H444.95M439.55 547.86 H444.95M439.55 554.23 H444.95M439.55 560.59 H444.95M430.2 566.96 H444.95M439.55 573.33 H444.95M439.55 579.69 H444.95M439.55 586.06 H444.95M439.55 592.42 H444.95M430.2 598.79 H444.95M439.55 605.16 H444.95M439.55 611.52 H444.95M439.55 617.89 H444.95M439.55 624.25 H444.95M430.2 630.62 H444.95M439.55 636.99 H444.95M439.55 643.35 H444.95M439.55 649.72 H444.95M439.55 656.08 H444.95M430.2 662.45 H444.95M439.55 668.82 H444.95M439.55 675.18 H444.95M439.55 681.55 H444.95M439.55 687.91 H444.95M430.2 694.28 H444.95M439.55 700.65 H444.95M439.55 707.01 H444.95M439.55 713.38 H444.95M439.55 719.74 H444.95M430.2 726.11 H444.95M439.55 732.48 H444.95M439.55 738.84 H444.95M439.55 745.21 H444.95M439.55 751.57 H444.95M430.2 757.94 H444.95M439.55 764.31 H444.95M439.55 770.67 H444.95M439.55 777.04 H444.95M439.55 783.40 H444.95M430.2 789.77 H444.95" stroke="#505050" stroke-width="0.95" fill="none"/><g font-family="&quot;Liberation Serif&quot;,serif" font-weight="700" font-size="9.4" fill="#111"><text x="446.65" y="176.4">0</text><text x="478.45" y="176.4">25</text><text x="510.26" y="176.4">50</text><text x="542.07" y="176.4">75</text><text x="573.87" y="176.4">100</text><text x="605.68" y="176.4">125</text><text x="637.48" y="176.4">150</text><text x="669.29" y="176.4">175</text><text x="701.09" y="176.4">200</text><text x="732.89" y="176.4">225</text><text x="764.70" y="176.4">250</text><text x="796.51" y="176.4">275</text><text x="828.31" y="176.4">300</text><text x="860.12" y="176.4">325</text><text x="891.92" y="176.4">350</text><text x="923.73" y="176.4">375</text><text x="955.53" y="176.4">400</text><text x="987.34" y="176.4">425</text><text x="1019.14" y="176.4">450</text><text x="1050.94" y="176.4">475</text><text x="1082.75" y="176.4">500</text><text x="1114.56" y="176.4">525</text><text x="1146.36" y="176.4">550</text><text x="1178.16" y="176.4">575</text><text x="1209.97" y="176.4">600</text><text x="1241.78" y="176.4">625</text><text x="428.3" y="195.90">0</text><text x="428.3" y="227.73">25</text><text x="428.3" y="259.56">50</text><text x="428.3" y="291.39">75</text><text x="428.3" y="323.22">100</text><text x="428.3" y="355.05">125</text><text x="428.3" y="386.88">150</text><text x="428.3" y="418.71">175</text><text x="428.3" y="450.54">200</text><text x="428.3" y="482.37">225</text><text x="428.3" y="514.20">250</text><text x="428.3" y="546.03">275</text><text x="428.3" y="577.86">300</text><text x="428.3" y="609.69">325</text><text x="428.3" y="641.52">350</text><text x="428.3" y="673.35">375</text><text x="428.3" y="705.18">400</text><text x="428.3" y="737.01">425</text><text x="428.3" y="768.84">450</text></g></g><rect x="587.6" y="303.4" width="523.50" height="402.60" fill="#fff" stroke="#707070" stroke-width="1.5" /><rect x="624" y="380.5" width="74.20" height="44.20" fill="#4f622c" stroke="#34431c" stroke-width="0.8" /><rect x="628.60" y="381.2" width="6.6" height="41.5" fill="#fff"/><rect x="638.32" y="381.2" width="6.6" height="41.5" fill="#fff"/><rect x="648.04" y="381.2" width="6.6" height="41.5" fill="#fff"/><rect x="657.76" y="381.2" width="6.6" height="41.5" fill="#fff"/><rect x="667.48" y="381.2" width="6.6" height="41.5" fill="#fff"/><rect x="677.20" y="381.2" width="6.6" height="41.5" fill="#fff"/><rect x="686.92" y="381.2" width="6.6" height="41.5" fill="#fff"/><rect x="621" y="366" width="80.20" height="14.60" fill="#4f622c" stroke="#34431c" stroke-width="0.8" /><rect x="708.3" y="380.5" width="74.20" height="44.20" fill="#4f622c" stroke="#34431c" stroke-width="0.8" /><rect x="712.90" y="381.2" width="6.6" height="41.5" fill="#fff"/><rect x="722.62" y="381.2" width="6.6" height="41.5" fill="#fff"/><rect x="732.34" y="381.2" width="6.6" height="41.5" fill="#fff"/><rect x="742.06" y="381.2" width="6.6" height="41.5" fill="#fff"/><rect x="751.78" y="381.2" width="6.6" height="41.5" fill="#fff"/><rect x="761.50" y="381.2" width="6.6" height="41.5" fill="#fff"/><rect x="771.22" y="381.2" width="6.6" height="41.5" fill="#fff"/><rect x="705.1" y="366" width="80.20" height="14.60" fill="#4f622c" stroke="#34431c" stroke-width="0.8" /><rect x="613.6" y="424.6" width="158.80" height="281.10" fill="url(#wood)" stroke="#b99a63" stroke-width="0.9" /><rect x="620.2" y="431.6" width="146.60" height="268.10" fill="#fff" stroke="#4e3b1b" stroke-width="0.9" /><rect x="620.2" y="444.3" width="146.60" height="6.90" fill="url(#wood)" stroke="#4e3b1b" stroke-width="0.9" /><rect x="620.2" y="455" width="146.60" height="7.10" fill="#c9c9c9" stroke="#777" stroke-width="0.9" /><path d="M620.6 619 H766.4" stroke="#aaa" stroke-width="1"/><rect x="620.6" y="628.2" width="145.80" height="6.80" fill="#e9e9e9" stroke="#9a9a9a" stroke-width="0.8" /><path d="M620.6 630.6 H766.4 M620.6 632.6 H766.4" stroke="#bdbdbd" stroke-width="0.6"/><path d="M656.8 628.2 V635" stroke="#8a8a8a" stroke-width="0.9"/><path d="M693.4 628.2 V635" stroke="#8a8a8a" stroke-width="0.9"/><path d="M730 628.2 V635" stroke="#8a8a8a" stroke-width="0.9"/><path d="M620.6 645.6 H766.4" stroke="#aaa" stroke-width="1"/><rect x="620.6" y="655.1" width="145.80" height="6.90" fill="#e9e9e9" stroke="#9a9a9a" stroke-width="0.8" /><path d="M620.6 657.55 H766.4 M620.6 659.55 H766.4" stroke="#bdbdbd" stroke-width="0.6"/><path d="M656.8 655.1 V662" stroke="#8a8a8a" stroke-width="0.9"/><path d="M693.4 655.1 V662" stroke="#8a8a8a" stroke-width="0.9"/><path d="M730 655.1 V662" stroke="#8a8a8a" stroke-width="0.9"/><path d="M620.6 672.8 H766.4" stroke="#aaa" stroke-width="1"/><rect x="620.6" y="682.1" width="145.80" height="7.00" fill="#e9e9e9" stroke="#9a9a9a" stroke-width="0.8" /><path d="M620.6 684.6 H766.4 M620.6 686.6 H766.4" stroke="#bdbdbd" stroke-width="0.6"/><path d="M656.8 682.1 V689.1" stroke="#8a8a8a" stroke-width="0.9"/><path d="M693.4 682.1 V689.1" stroke="#8a8a8a" stroke-width="0.9"/><path d="M730 682.1 V689.1" stroke="#8a8a8a" stroke-width="0.9"/><rect x="772.4" y="424.6" width="78.00" height="281.10" fill="url(#wood)" stroke="#b99a63" stroke-width="0.9" /><rect x="780.3" y="433" width="63.40" height="34.40" fill="#fff" stroke="#4e3b1b" stroke-width="0.9" /><rect x="780.3" y="476.6" width="63.40" height="35.80" fill="#fff" stroke="#4e3b1b" stroke-width="0.9" /><rect x="780.3" y="522" width="63.40" height="37.00" fill="#fff" stroke="#4e3b1b" stroke-width="0.9" /><rect x="780.3" y="568.5" width="63.40" height="36.80" fill="#fff" stroke="#4e3b1b" stroke-width="0.9" /><rect x="780.3" y="615.3" width="63.40" height="32.80" fill="#fff" stroke="#4e3b1b" stroke-width="0.9" /><rect x="780.3" y="658.6" width="63.40" height="36.40" fill="#fff" stroke="#4e3b1b" stroke-width="0.9" /><polygon points="783.4000000000001,622.3 842.0,622.3 835.3000000000001,648.1 790.1,648.1" fill="url(#bask)"/><rect x="802.5" y="627.9" width="20.4" height="4.7" rx="1.9" fill="#4a4a4a"/><polygon points="783.4000000000001,669.4 842.0,669.4 835.3000000000001,695 790.1,695" fill="url(#bask)"/><rect x="802.5" y="675.0" width="20.4" height="4.7" rx="1.9" fill="#4a4a4a"/><rect x="1007.4" y="424.4" width="79.00" height="281.30" fill="url(#wood)" stroke="#6b5631" stroke-width="0.9" /><rect x="1015.4" y="433" width="63.00" height="34.40" fill="#fff" stroke="#4e3b1b" stroke-width="0.9" /><rect x="1015.4" y="476.6" width="63.00" height="35.80" fill="#fff" stroke="#4e3b1b" stroke-width="0.9" /><rect x="1015.4" y="522" width="63.00" height="37.00" fill="#fff" stroke="#4e3b1b" stroke-width="0.9" /><rect x="1015.4" y="568.5" width="63.00" height="36.80" fill="#fff" stroke="#4e3b1b" stroke-width="0.9" /><rect x="1015.4" y="615.3" width="63.00" height="32.80" fill="#fff" stroke="#4e3b1b" stroke-width="0.9" /><rect x="1015.4" y="658.6" width="63.00" height="36.40" fill="#fff" stroke="#4e3b1b" stroke-width="0.9" /><polygon points="1018.3000000000002,622.3 1076.9,622.3 1070.2,648.1 1025.0000000000002,648.1" fill="url(#bask)"/><rect x="1037.4" y="627.9" width="20.4" height="4.7" rx="1.9" fill="#4a4a4a"/><polygon points="1018.3000000000002,669.4 1076.9,669.4 1070.2,695 1025.0000000000002,695" fill="url(#bask)"/><rect x="1037.4" y="675.0" width="20.4" height="4.7" rx="1.9" fill="#4a4a4a"/><rect x="851.4" y="426" width="155.80" height="279.60" fill="url(#wood)" stroke="#b99a63" stroke-width="0.9" /><rect x="854.4" y="431" width="73.10" height="173.40" fill="url(#wood)" stroke="#4e3b1b" stroke-width="0.9" /><rect x="854.4" y="604.4" width="73.10" height="20.60" fill="url(#wood)" stroke="#4e3b1b" stroke-width="0.9" /><rect x="854.4" y="625" width="73.10" height="66.00" fill="url(#wood)" stroke="#4e3b1b" stroke-width="0.9" /><rect x="854.4" y="691" width="73.10" height="11.60" fill="url(#wood)" stroke="#4e3b1b" stroke-width="0.9" /><rect x="927.6999999999999" y="431" width="73.10" height="173.40" fill="url(#wood)" stroke="#4e3b1b" stroke-width="0.9" /><rect x="927.6999999999999" y="604.4" width="73.10" height="20.60" fill="url(#wood)" stroke="#4e3b1b" stroke-width="0.9" /><rect x="927.6999999999999" y="625" width="73.10" height="66.00" fill="url(#wood)" stroke="#4e3b1b" stroke-width="0.9" /><rect x="927.6999999999999" y="691" width="73.10" height="11.60" fill="url(#wood)" stroke="#4e3b1b" stroke-width="0.9" /><rect x="863.6" y="449" width="22.00" height="133.40" fill="none" stroke="#4e3b1b" stroke-width="0.9" /><rect x="868" y="456.4" width="13.60" height="118.60" fill="none" stroke="#4e3b1b" stroke-width="0.9" /><rect x="895" y="449" width="21.60" height="133.40" fill="none" stroke="#4e3b1b" stroke-width="0.9" /><rect x="899.4" y="456.4" width="13.00" height="118.60" fill="none" stroke="#4e3b1b" stroke-width="0.9" /><rect x="937.4" y="449" width="21.80" height="133.40" fill="none" stroke="#4e3b1b" stroke-width="0.9" /><rect x="942" y="456.4" width="13.00" height="118.60" fill="none" stroke="#4e3b1b" stroke-width="0.9" /><rect x="968.6" y="449" width="21.80" height="133.40" fill="none" stroke="#4e3b1b" stroke-width="0.9" /><rect x="973" y="456.4" width="13.40" height="118.60" fill="none" stroke="#4e3b1b" stroke-width="0.9" /><rect x="859.6" y="609" width="63.60" height="11.00" fill="none" stroke="#4e3b1b" stroke-width="0.9" /><rect x="862" y="611.4" width="58.80" height="6.00" fill="none" stroke="#4e3b1b" stroke-width="0.9" /><rect x="859.4" y="634" width="64.00" height="50.40" fill="none" stroke="#4e3b1b" stroke-width="0.9" /><rect x="863" y="637" width="57.00" height="44.40" fill="none" stroke="#4e3b1b" stroke-width="0.9" /><rect x="932.9" y="609" width="63.60" height="11.00" fill="none" stroke="#4e3b1b" stroke-width="0.9" /><rect x="935.3" y="611.4" width="58.80" height="6.00" fill="none" stroke="#4e3b1b" stroke-width="0.9" /><rect x="932.6999999999999" y="634" width="64.00" height="50.40" fill="none" stroke="#4e3b1b" stroke-width="0.9" /><rect x="936.3" y="637" width="57.00" height="44.40" fill="none" stroke="#4e3b1b" stroke-width="0.9" /></svg>

<div class="abs" style="left:1179.5px;top:767.2px;width:24px;height:3.8px;background:#c6c6c6;border-radius:1.9px"></div>
<div class="abs" style="left:1214px;top:767.2px;width:120px;height:3.8px;background:rgba(240,240,241,0.92);border-radius:1.9px"></div>
<div class="abs" style="left:1201.5px;top:759.5px;width:14.2px;height:17.4px;background:#fff;border:1px solid #969696;border-radius:2.5px;box-shadow:0.6px 0.8px 1px rgba(0,0,0,0.35)"></div>
<svg style="left:1330px;top:757.2px;" width="45.4" height="23.6" viewBox="0 0 45.4 23.6"><path d="M11 0 H40.4 Q45.4 0 45.4 5 V18.6 Q45.4 23.6 40.4 23.6 H11 Q8.6 23.6 7 21.6 L0.6 13.4 Q-0.2 11.8 0.6 10.2 L7 2 Q8.6 0 11 0 Z" fill="#ebecee"/></svg>
<div class="t" style="left:1344.20px;top:764.00px;font-size:11.5px;color:#444;">85%</div>
<div class="abs" style="left:1396.5px;top:120px;width:2.5px;height:36px;background:#cfd0d1"></div>

<div class="abs" id="botbar"></div>
</div>
</body>
</html>
